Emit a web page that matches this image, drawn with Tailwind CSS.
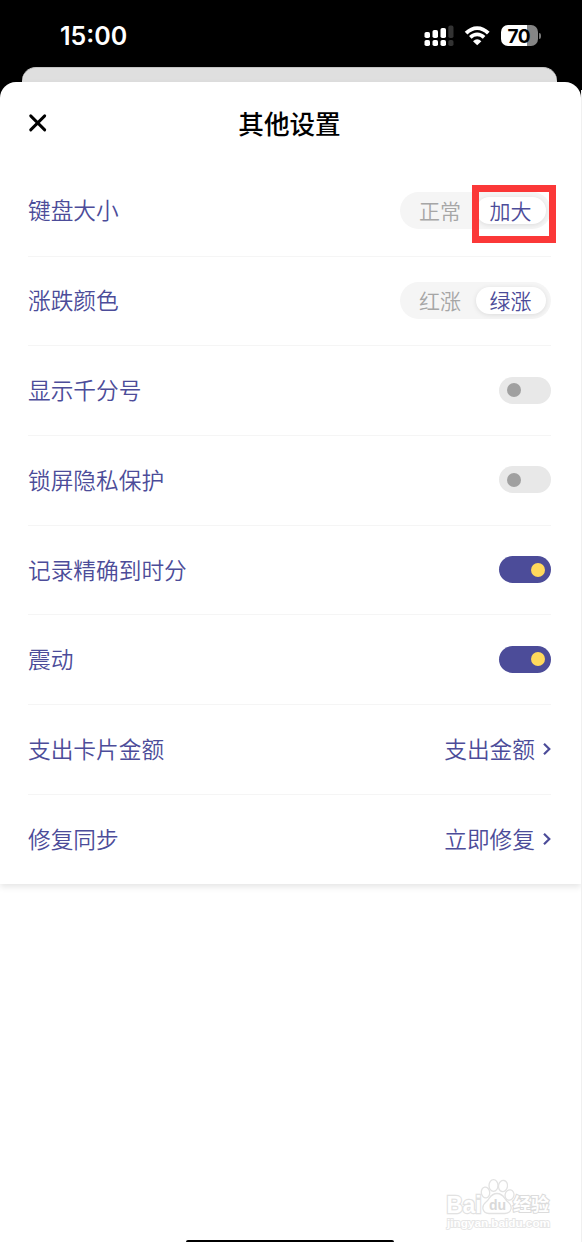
<!DOCTYPE html>
<html lang="zh-CN">
<head>
<meta charset="utf-8">
<title>其他设置</title>
<script src="https://cdn.jsdelivr.net/npm/@tailwindcss/browser@4"></script>
</head>
<body class="bg-white">
<div class="relative flex h-[1242px] w-[582px] flex-col overflow-hidden bg-white font-['Noto_Sans_CJK_SC',sans-serif] text-[22.7px] font-[350] text-[#4c4c99]">
  <header class="relative h-[100px] shrink-0 bg-black">
    <div class="flex h-[67px] items-start justify-between pr-[41px] pl-[60px] pt-[25px]">
      <div class="mt-[-3px] font-['Inter',sans-serif] text-[25px] leading-[29px] font-semibold text-white">15:00</div>
      <div class="flex items-start">
        <svg class="h-[21px] w-[30px]" viewBox="0 0 30 21" fill="#fff">
          <rect x="0.5" y="7" width="5.5" height="6" rx="1.8"/><rect x="8.5" y="5" width="5.5" height="8" rx="1.8"/><rect x="16.5" y="3" width="5.5" height="10" rx="1.8"/>
          <rect x="0.5" y="15" width="5.5" height="6" rx="1.8"/><rect x="8.5" y="15" width="5.5" height="6" rx="1.8"/><rect x="16.5" y="15" width="5.5" height="6" rx="1.8"/>
          <g fill="#333"><rect x="24.3" y="0.6" width="5.2" height="12.4" rx="1.8"/><rect x="24.3" y="15" width="5.2" height="6" rx="1.8"/></g>
        </svg>
        <svg class="ml-[10px] h-[21px] w-[27px]" viewBox="0 0 27 21" fill="none" stroke="#fff">
          <path d="M2.1 8.2Q7.2 3.1 13.2 3.1T24.3 8.2" stroke-width="3.8"/>
          <path d="M6.3 12.4Q9.5 9.4 13.2 9.4T20.1 12.4" stroke-width="3.7"/>
          <path d="M9 16.2Q13.2 12.4 17.4 16.2L13.2 20.3Z" fill="#fff" stroke="none"/>
        </svg>
        <div class="ml-[9.5px] flex h-[21px] w-[37.5px] items-center justify-center rounded-[7px] bg-linear-to-r from-white from-70% to-[#858585] to-70% pt-[2px] pr-[1px] font-['Inter',sans-serif] text-[19px] leading-[20px] font-bold tracking-[-0.6px] text-black">70</div>
        <div class="mt-[8px] ml-[1px] h-[6px] w-[2px] rounded-r-full bg-[#777]"></div>
      </div>
    </div>
    <div class="mr-[25px] ml-[22px] h-[33px] rounded-t-[14px] border-t border-[#c4c4c4] bg-[#dfdfdf]"></div>
  </header>

  <main class="relative mt-[-18px] h-[802px] w-[581px] shrink-0 rounded-t-[16px] bg-white px-[28px] shadow-[0_3px_6px_rgba(0,0,0,0.10)]">
    <div class="flex h-[85px] items-center pb-[3px]">
      <svg class="h-[20px] w-[20px]" viewBox="0 0 20 20" fill="none" stroke="#000" stroke-width="2.9" stroke-linecap="round"><path d="M2.7 2.9 16.7 16.9M16.7 2.9 2.7 16.9"/></svg>
      <h1 class="flex-1 pr-[22px] text-center text-[25.6px] leading-[30px] font-medium text-black">其他设置</h1>
    </div>
    <div class="mr-[2px]">
      <div class="flex h-[89.7px] items-center justify-between border-b border-[#f5f5f5] pb-[1px]"><span class="mt-[-1px]">键盘大小</span>
        <div class="relative flex h-[37px] w-[151px] items-center rounded-full bg-[#f5f5f5] pr-[5px] text-[21px] leading-[27px]"><span class="mt-[-1px] flex-1 pl-[4px] text-center text-[#a6a6a6]">正常</span><span class="h-[27px] w-[70px] rounded-full bg-white pr-[1px] text-center leading-[26px] shadow-[0_1px_5px_rgba(0,0,0,0.10)]">加大</span>
          <div class="absolute top-[-7px] left-[72px] h-[58px] w-[84px] border-[7px] border-[#fb3838]"></div>
        </div>
      </div>
      <div class="flex h-[89.7px] items-center justify-between border-b border-[#f5f5f5] pb-[1.4px]"><span>涨跌颜色</span>
        <div class="flex h-[37px] w-[151px] items-center rounded-full bg-[#f5f5f5] pr-[5px] text-[21px] leading-[27px]"><span class="flex-1 pl-[4px] text-center text-[#a6a6a6]">红涨</span><span class="h-[27px] w-[70px] rounded-full bg-white pr-[1px] text-center leading-[26px] shadow-[0_1px_5px_rgba(0,0,0,0.10)]">绿涨</span></div>
      </div>
      <div class="flex h-[89.7px] items-center justify-between border-b border-[#f5f5f5] pb-[1px]"><span>显示千分号</span>
        <div class="flex h-[27px] w-[52px] items-center rounded-full bg-[#e8e8e8] px-[8px]"><i class="size-[14px] rounded-full bg-[#a0a0a0]"></i></div>
      </div>
      <div class="flex h-[89.7px] items-center justify-between border-b border-[#f5f5f5] pb-[1px]"><span>锁屏隐私保护</span>
        <div class="flex h-[27px] w-[52px] items-center rounded-full bg-[#e8e8e8] px-[8px]"><i class="size-[14px] rounded-full bg-[#a0a0a0]"></i></div>
      </div>
      <div class="flex h-[89.7px] items-center justify-between border-b border-[#f5f5f5] pb-[1px]"><span>记录精确到时分</span>
        <div class="flex h-[27px] w-[52px] items-center justify-end rounded-full bg-[#4c4c99] px-[6px]"><i class="size-[14px] rounded-full bg-[#ffd95c]"></i></div>
      </div>
      <div class="flex h-[89.7px] items-center justify-between border-b border-[#f5f5f5] pb-[1px]"><span>震动</span>
        <div class="flex h-[27px] w-[52px] items-center justify-end rounded-full bg-[#4c4c99] px-[6px]"><i class="size-[14px] rounded-full bg-[#ffd95c]"></i></div>
      </div>
      <div class="flex h-[89.7px] items-center justify-between border-b border-[#f5f5f5]"><span>支出卡片金额</span>
        <div class="flex items-center gap-[8px]"><span>支出金额</span><svg class="h-[12px] w-[8px]" viewBox="0 0 8 12" fill="none" stroke="#4c4c99" stroke-width="2.2"><path d="M1 .8 6.3 6 1 11.2"/></svg></div>
      </div>
      <div class="flex h-[89.7px] items-center justify-between pb-[2px]"><span>修复同步</span>
        <div class="flex items-center gap-[8px]"><span>立即修复</span><svg class="h-[12px] w-[8px]" viewBox="0 0 8 12" fill="none" stroke="#4c4c99" stroke-width="2.2"><path d="M1 .8 6.3 6 1 11.2"/></svg></div>
      </div>
    </div>
  </main>

  <footer class="flex flex-1 flex-col items-end justify-end">
    <svg class="mr-[26px] mb-[7px] h-[58px] w-[112px]" viewBox="0 0 112 58" fill="#fff" stroke="#e2e2e2" stroke-width="1.3">
      <ellipse cx="41.500" cy="17.500" rx="4.200" ry="5.400" transform="rotate(-8 41.500 17.500)"/><ellipse cx="49.500" cy="10.500" rx="4.500" ry="5.800"/><ellipse cx="59" cy="11" rx="4.500" ry="5.600" transform="rotate(10 59 11)"/><ellipse cx="65.500" cy="20" rx="4.400" ry="5.200" transform="rotate(12 65.500 20)"/>
      <g font-family="Liberation Sans, sans-serif" font-weight="700" paint-order="stroke">
        <text x="2.500" y="37.500" font-size="23" textLength="35" lengthAdjust="spacingAndGlyphs" stroke-width="2.400">Bai</text>
        <text x="69" y="35.500" font-size="18" font-family="Noto Sans CJK SC, sans-serif" textLength="36" stroke="#dcdcdc" stroke-width="2.200">经验</text>
        <text x="3" y="51.500" font-size="11.500" textLength="103" lengthAdjust="spacingAndGlyphs" stroke-width="1.800" stroke="#e6e6e6">jingyan.baidu.com</text>
      </g>
      <path d="M53 18.500C46 18.500 46 24 42 27C37 31 38 38 45 38.500H61C68 38 69 31 64 27C60 24 60 18.500 53 18.500Z"/>
      <text x="45" y="35" font-family="Liberation Sans, sans-serif" font-weight="700" font-size="14" fill="#d9d9d9" stroke="none">du</text>
    </svg>
    <div class="mr-[188px] h-[2.500px] w-[208px] rounded-t-[3px] bg-black"></div>
  </footer>
  <div class="absolute top-[90px] right-0 bottom-0 w-px bg-[#f0f0f0]"></div>
</div>
</body>
</html>
